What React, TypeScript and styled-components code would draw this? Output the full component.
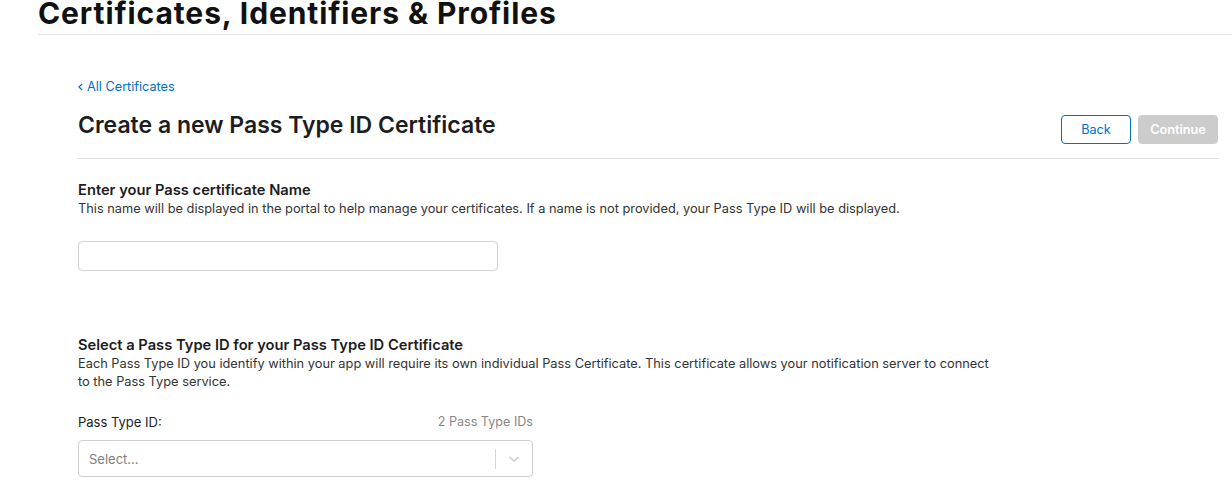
import React from "react";
import styled, { createGlobalStyle } from "styled-components";

const Global = createGlobalStyle`
  html, body { margin: 0; padding: 0; background: #fff; }
  body { font-family: Inter, "Noto Sans", "Liberation Sans", sans-serif; color: #1d1d1f; overflow: hidden; }
  * { box-sizing: border-box; }
`;

const Page = styled.div`
  width: 1232px;
  height: 488px;
  overflow: hidden;
`;

const Header = styled.header`
  margin-left: 38px;
  border-bottom: 1px solid #e5e5e5;
  padding-bottom: 6px;
`;

const SiteTitle = styled.h1`
  margin: -2px 0 0;
  font-size: 30px;
  line-height: 30px;
  font-weight: 700;
  letter-spacing: 0.9px;
  color: #111;
`;

const Content = styled.main`
  padding: 40px 14px 0 78px;
`;

const BackLink = styled.a`
  display: inline-flex;
  align-items: center;
  gap: 4px;
  font-size: 12.7px;
  line-height: 16px;
  color: #0070c9;
  text-decoration: none;
`;

const TitleRow = styled.div`
  display: flex;
  align-items: flex-start;
  justify-content: space-between;
  margin-top: 15px;
  padding-bottom: 14px;
  border-bottom: 1px solid #e0e0e0;
`;

const PageTitle = styled.h2`
  margin: 0;
  font-size: 23px;
  line-height: 30px;
  font-weight: 600;
  color: #1d1d1f;
`;

const Actions = styled.div`
  display: flex;
  gap: 7px;
  margin-top: 5px;
`;

const Button = styled.button<{ $primary?: boolean }>`
  height: 29px;
  padding: 0;
  width: ${(p) => (p.$primary ? "80px" : "70px")};
  border-radius: 4px;
  font-family: inherit;
  font-size: 12.7px;
  font-weight: ${(p) => (p.$primary ? 600 : 400)};
  border: 1px solid ${(p) => (p.$primary ? "#cccccc" : "#0070c9")};
  background: ${(p) => (p.$primary ? "#cccccc" : "#fff")};
  color: ${(p) => (p.$primary ? "#fff" : "#0070c9")};
`;

const Section = styled.section<{ $top: number }>`
  margin-top: ${(p) => p.$top}px;
`;

const SectionTitle = styled.h3`
  margin: 0;
  font-size: 14.7px;
  line-height: 20px;
  font-weight: 600;
  color: #1d1d1f;
`;

const Description = styled.p`
  margin: 0;
  max-width: 912px;
  font-size: 12.8px;
  line-height: 18px;
  color: #333;
`;

const TextInput = styled.input`
  display: block;
  margin-top: 23px;
  width: 420px;
  height: 30px;
  border: 1px solid #d2d2d7;
  border-radius: 4px;
  background: #fff;
`;

const FieldHeader = styled.div`
  display: flex;
  justify-content: space-between;
  align-items: center;
  width: 455px;
  margin-top: 22px;
  line-height: 18px;
`;

const Label = styled.span`
  font-size: 13px;
  color: #1d1d1f;
`;

const Count = styled.span`
  font-size: 12.6px;
  color: #888;
`;

const SelectBox = styled.div`
  display: flex;
  align-items: center;
  margin-top: 9px;
  width: 455px;
  height: 37px;
  border: 1px solid #cfcfcf;
  border-radius: 4px;
  background: #fff;
`;

const Placeholder = styled.span`
  flex: 1;
  padding-left: 10px;
  font-size: 13px;
  color: #808080;
`;

const Indicator = styled.div`
  display: flex;
  align-items: center;
  justify-content: center;
  width: 37px;
  height: 20px;
  border-left: 1px solid #d6d6d6;
`;

export default function App() {
  return (
    <Page>
      <Global />
      <Header>
        <SiteTitle>Certificates, Identifiers &amp; Profiles</SiteTitle>
      </Header>
      <Content>
        <BackLink href="#">
          <svg width="5" height="8" viewBox="0 0 5 8">
            <path d="M4 1 L1 4 L4 7" fill="none" stroke="#0070c9" strokeWidth="1.2" />
          </svg>
          All Certificates
        </BackLink>
        <TitleRow>
          <PageTitle>Create a new Pass Type ID Certificate</PageTitle>
          <Actions>
            <Button>Back</Button>
            <Button $primary>Continue</Button>
          </Actions>
        </TitleRow>
        <Section $top={21}>
          <SectionTitle>Enter your Pass certificate Name</SectionTitle>
          <Description>
            This name will be displayed in the portal to help manage your certificates. If a name is not provided, your Pass Type ID will be displayed.
          </Description>
          <TextInput />
        </Section>
        <Section $top={64}>
          <SectionTitle>Select a Pass Type ID for your Pass Type ID Certificate</SectionTitle>
          <Description>
            Each Pass Type ID you identify within your app will require its own individual Pass Certificate. This certificate allows your notification server to connect to the Pass Type service.
          </Description>
          <FieldHeader>
            <Label>Pass Type ID:</Label>
            <Count>2 Pass Type IDs</Count>
          </FieldHeader>
          <SelectBox>
            <Placeholder>Select...</Placeholder>
            <Indicator>
              <svg width="12" height="8" viewBox="0 0 12 8">
                <path d="M1.5 2 L6 6 L10.5 2" fill="none" stroke="#c8c8c8" strokeWidth="1.5" />
              </svg>
            </Indicator>
          </SelectBox>
        </Section>
      </Content>
    </Page>
  );
}
